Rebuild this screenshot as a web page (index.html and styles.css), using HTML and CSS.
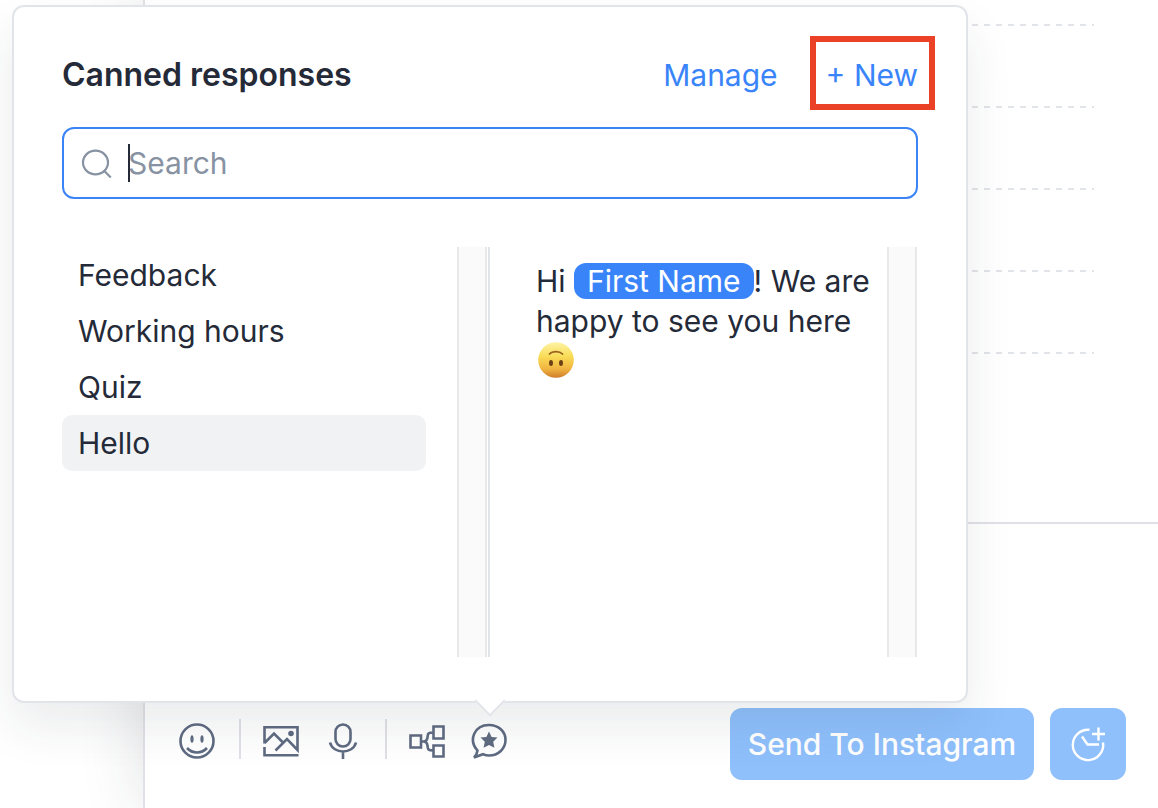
FILE: index.html
```html
<!DOCTYPE html>
<html lang="en">
<head>
    <meta charset="UTF-8">
    <meta name="viewport" content="width=device-width, initial-scale=1.0">
    <title>Canned responses</title>
    <link rel="stylesheet" href="styles.css">
</head>
<body>
    <div class="app">
        <aside class="sidebar"></aside>
        <main class="chat">
            <div class="thread">
                <div class="row"></div>
                <div class="row"></div>
                <div class="row"></div>
                <div class="row"></div>
                <div class="row"></div>
            </div>
            <div class="composer">
                <div class="toolbar">
                    <button class="tool" type="button" aria-label="Emoji">
                        <svg viewBox="0 0 36 36"><circle cx="18" cy="18" r="16.5"/><path d="M8 25c5.500 6 14.500 6 20 0"/><ellipse class="fill" cx="13" cy="16" rx="1.600" ry="3.800"/><ellipse class="fill" cx="23" cy="16" rx="1.600" ry="3.800"/></svg>
                    </button>
                    <span class="divider"></span>
                    <button class="tool" type="button" aria-label="Image">
                        <svg viewBox="0 0 36 36"><path d="M1.500 20.500V4.200H34.500V27L24 16 12.500 27.500M1.500 20L11 10.500 20 19.500M1.500 24V32.200H35.500"/><circle class="fill" cx="28" cy="10.500" r="2.800"/></svg>
                    </button>
                    <button class="tool" type="button" aria-label="Voice">
                        <svg viewBox="0 0 36 36"><rect x="10.500" y="1.500" width="15" height="22" rx="7.500"/><path d="M5 19.500c3 12 23 12 26 0M18 28.500V36"/></svg>
                    </button>
                    <span class="divider"></span>
                    <button class="tool" type="button" aria-label="Flow">
                        <svg viewBox="0 0 36 36"><path d="M1.500 12.500h10.500v12H1.500zM24.500 3.500h10v12h-10zM24.500 22.500h10v11h-10zM12 18.500h4M24 9.500c-6 0-5 2-5.500 5-.5 3-1.500 4-4 4 2.500 0 3.500 1 4 4 .5 3-.5 5 5.500 5"/></svg>
                    </button>
                    <button class="tool" type="button" aria-label="Canned responses">
                        <svg viewBox="0 0 36 36"><path d="M6.500 27.500C-3 17 3.500 2 18 2c9.500 0 16.500 6.500 16.500 15S27.500 32.500 18 32.500c-2.500 0-4-.5-6-1.300L3 34.500c2-2 3.200-4 3.500-7z"/><path class="fill" d="M18 8.500l2.600 5.500 5.900.6-4.300 4.200 1.200 6-5.400-2.800-5.400 2.800 1.200-6-4.300-4.200 5.900-.6z"/></svg>
                    </button>
                </div>
                <div class="actions">
                    <button class="send" type="button">Send To Instagram</button>
                    <button class="schedule" type="button" aria-label="Schedule">
                        <svg viewBox="0 0 36 36"><path d="M19.500 3.800A15.200 15.200 0 1 0 33 16.500M28.500 1.500v13M22 8h13M12 10.500l5.500 8H29"/></svg>
                    </button>
                </div>
            </div>
        </main>

        <section class="popover">
            <header class="popover-header">
                <h1>Canned responses</h1>
                <a class="link" href="#manage">Manage</a>
                <button class="link new" type="button">+ New</button>
            </header>
            <label class="search">
                <svg viewBox="0 0 32 32"><ellipse cx="15.500" cy="15.500" rx="12.500" ry="11.800"/><path d="M23.800 23.500l7 7"/></svg>
                <span class="field">
                    <input type="text" placeholder="Search" aria-label="Search">
                    <span class="caret"></span>
                </span>
            </label>
            <div class="panes">
                <ul class="list">
                    <li>Feedback</li>
                    <li>Working hours</li>
                    <li>Quiz</li>
                    <li class="active">Hello</li>
                </ul>
                <div class="track"></div>
                <div class="preview">
                    <p>Hi <span class="tag">First Name</span>! We are happy to see you here
                        <svg class="emoji" viewBox="0 0 36 36" role="img" aria-label="Upside-down face">
                            <defs>
                                <linearGradient id="face" x1="0" y1="0" x2="0" y2="1">
                                    <stop offset="0" stop-color="#fdf3a4"/>
                                    <stop offset=".4" stop-color="#f9dc57"/>
                                    <stop offset=".75" stop-color="#f0b440"/>
                                    <stop offset="1" stop-color="#cf7b2b"/>
                                </linearGradient>
                            </defs>
                            <circle cx="18" cy="18" r="17.800" fill="url(#face)"/>
                            <path d="M11.500 12c3-3.200 10-3.200 13 0" fill="none" stroke="#9a6420" stroke-width="1.800" stroke-linecap="round"/>
                            <ellipse cx="13" cy="21" rx="2" ry="3" fill="#6d4115"/>
                            <ellipse cx="23" cy="21" rx="2" ry="3" fill="#6d4115"/>
                        </svg>
                    </p>
                </div>
                <div class="track"></div>
            </div>
        </section>
    </div>
</body>
</html>
```

FILE: styles.css
```css
* { box-sizing: border-box; }
body { margin: 0; font-family: Inter, "Liberation Sans", sans-serif; font-size: 30px; line-height: 40px; color: #242a38; background: #fff; }
button, input { font: inherit; }
button { border: 0; padding: 0; background: none; cursor: pointer; }
svg { display: block; fill: none; stroke: currentColor; }

.app { position: relative; display: flex; min-height: 100vh; overflow: hidden; }
.sidebar { flex: 0 0 143px; }
.chat { flex: 1; display: flex; flex-direction: column; border-left: 2px solid #dfe1e6; background: #fff; box-shadow: 0 0 60px rgba(36, 42, 56, 0.14); }

.thread { flex: 1; padding: 0 64px 0 59px; }
.row { height: 82px; background: repeating-linear-gradient(to right, #e1e4e8 0 6px, transparent 6px 12px) bottom / 100% 2px no-repeat; }
.row:first-child { height: 26px; }

.composer { display: flex; justify-content: space-between; align-items: flex-end; height: 286px; padding: 0 32px 28px 34px; border-top: 2px solid #dfe1e6; }
.toolbar { display: flex; align-items: flex-start; height: 61px; color: #5f6b82; }
.tool { display: flex; align-items: center; height: 44px; color: inherit; }
.tool + .tool { margin-left: 26px; }
.tool svg { width: 36px; height: 36px; stroke-width: 2.6; }
.tool .fill { fill: currentColor; stroke: none; }
.divider { width: 2px; height: 40px; margin: 0 22px 0 24px; background: #dfe1e6; }

.actions { display: flex; gap: 16px; }
.send, .schedule { display: flex; align-items: center; justify-content: center; height: 72px; border-radius: 12px; background: #8fc0fc; color: #fff; }
.send { width: 304px; font-weight: 500; }
.schedule { width: 76px; }
.schedule svg { width: 36px; height: 36px; stroke-width: 2.4; }

.popover { position: absolute; left: 12px; bottom: 105px; width: 956px; max-width: calc(100% - 24px); padding: 48px 48px 44px; border: 2px solid #e1e4e9; border-radius: 12px; background: #fff; box-shadow: 0 24px 48px rgba(36, 42, 56, 0.09); }
.popover::after { content: ""; position: absolute; left: 50%; bottom: -11px; width: 20px; height: 20px; border: solid #e1e4e9; border-width: 0 2px 2px 0; background: #fff; transform: translateX(-50%) rotate(45deg); }

.popover-header { display: flex; align-items: center; margin-bottom: 32px; }
.popover-header h1 { flex: 1; margin: 0; font-size: 32px; line-height: 40px; font-weight: 600; }
.link { color: #3a84fa; text-decoration: none; }
.new { position: relative; margin-left: 48px; }
.new::after { content: ""; position: absolute; inset: -19px -17px -15px -16px; border: 6px solid #eb4126; }

.search { display: flex; align-items: center; gap: 16px; height: 72px; padding: 0 16px; border: 2px solid #3a84f8; border-radius: 12px; }
.search > svg { flex: none; width: 32px; height: 32px; stroke: #8792a2; stroke-width: 2.2; }
.field { position: relative; flex: 1; display: flex; }
.field input { width: 100%; height: 40px; padding: 0; border: 0; outline: 0; background: none; color: inherit; }
.field input::placeholder { color: #8792a2; opacity: 1; }
.caret { position: absolute; left: 0; top: 1px; width: 2px; height: 38px; background: #242a38; }

.panes { display: flex; height: 410px; margin: 48px 1px 0 0; }
.list { flex: 1; margin: 0; padding: 0 31px 0 0; list-style: none; }
.list li { padding: 8px 16px; border-radius: 10px; }
.list .active { background: #f1f2f4; }
.track { flex: none; width: 30px; border: solid #e8e8e8; border-width: 0 2px; background: #fafafa; }
.preview { flex: none; width: 399px; margin-left: 1px; padding: 14px 0 0 46px; border-left: 2px solid #e1e4e9; }
.preview p { margin: 0; }
.tag { display: inline-block; padding: 0 13px; border-radius: 12px; line-height: 36px; background: #3a84fa; color: #fff; }
.emoji { display: block; width: 36px; height: 36px; margin: 1px 2px; stroke: none; }
```
